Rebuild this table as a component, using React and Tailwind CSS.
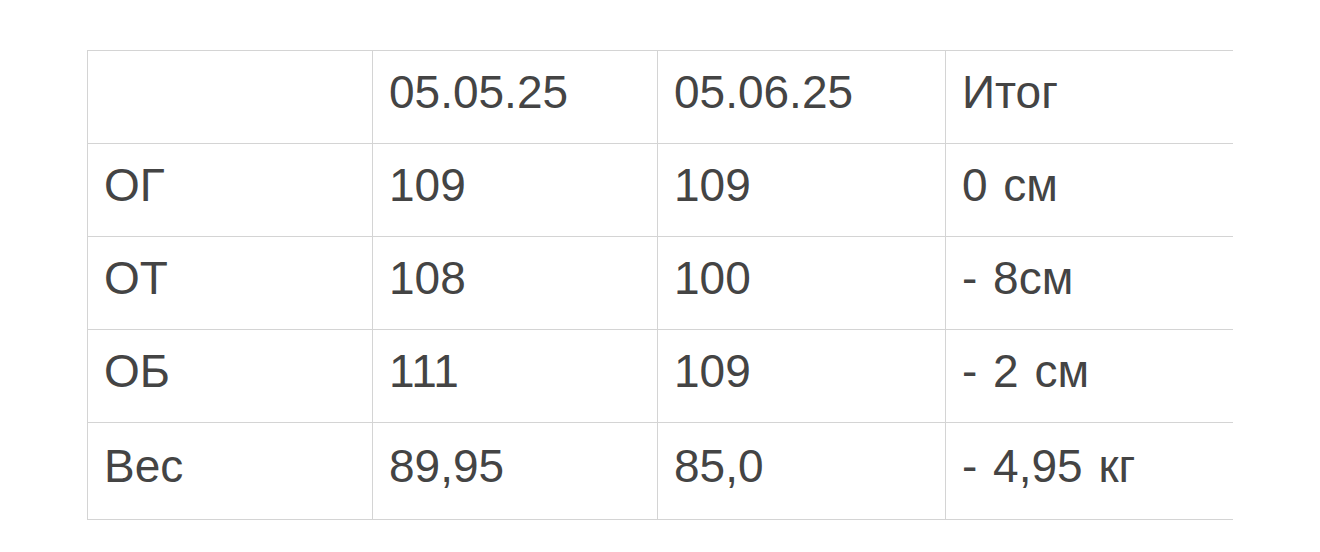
import React from "react";

const rows = [
  ["", "05.05.25", "05.06.25", "Итог"],
  ["ОГ", "109", "109", "0 см"],
  ["ОТ", "108", "100", "- 8см"],
  ["ОБ", "111", "109", "- 2 см"],
  ["Вес", "89,95", "85,0", "- 4,95 кг"],
];

export default function App() {
  return (
    <div className="w-[1320px] h-[552px] bg-white pt-[50px] pl-[87px]" style={{ fontFamily: '"Liberation Sans", Arial, sans-serif' }}>
      <div className="grid grid-cols-[285px_285px_288px_288px] text-[46px] text-[#444] leading-normal">
        {rows.map((r, i) => (
          <React.Fragment key={i}>
            {r.map((c, j) => (
              <div
                key={j}
                className={
                  "flex items-center pl-4 pb-[9px] border-t border-l border-[#d4d4d4] " +
                  (j === 3 ? "[word-spacing:3px] " : "") +
                  (i === rows.length - 1 ? "h-[98px] border-b" : "h-[93px]")
                }
              >
                {c}
              </div>
            ))}
          </React.Fragment>
        ))}
      </div>
    </div>
  );
}
